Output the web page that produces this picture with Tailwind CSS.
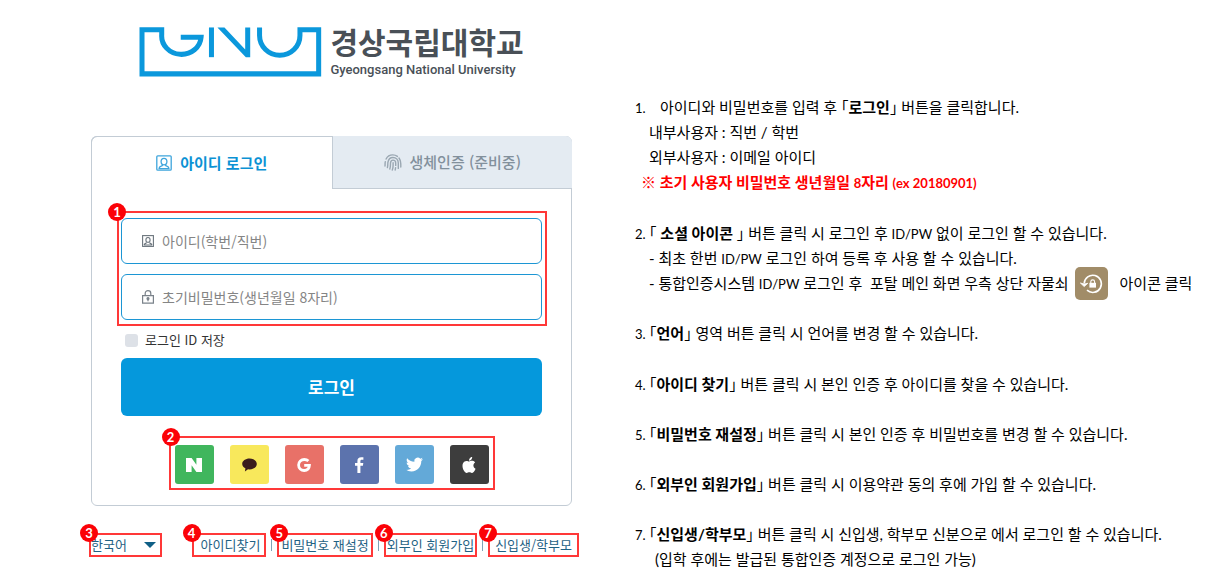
<!DOCTYPE html>
<html lang="ko">
<head>
    <meta charset="UTF-8">
    <meta name="viewport" content="width=device-width, initial-scale=1.0">
    <title>경상국립대학교 통합인증 로그인 안내</title>
    <script src="https://cdn.jsdelivr.net/npm/@tailwindcss/browser@4"></script>
</head>
<body class="bg-white text-black font-['Noto_Sans_CJK_KR',sans-serif]">
<div class="grid grid-cols-[481fr_590fr] gap-x-[63px] pl-[91px]">

    <!-- Login -->
    <main class="pt-[27px]">
        <header class="flex justify-center gap-2 h-[50px]">
            <svg class="w-[183px] h-[50px] shrink-0" viewBox="27 37 548 149" fill="none" stroke="#0b98dc" stroke-width="15" aria-hidden="true">
                <path d="M152 67H213A59 55 0 0 1 95 60V45H36V177H565V45H509V62A60 59 0 0 1 388 62V38"/>
                <path d="M244 38V127"/>
                <path d="M262 38H283L345 104V38H360V127H347Z" fill="#0b98dc" stroke="none"/>
            </svg>
            <div class="text-[#495057]">
                <h1 class="text-[30px] leading-[28px] font-bold whitespace-nowrap">경상국립대학교</h1>
                <p class="mt-1 font-['Roboto',sans-serif] text-[13px] leading-[22px] font-medium whitespace-nowrap">Gyeongsang National University</p>
            </div>
        </header>

        <form class="mt-[59px] border border-[#c3ccd5] rounded-md pb-[15px]">
            <div class="grid grid-cols-2 h-[53px] -mt-px -mx-px">
                <button type="button" class="flex items-center justify-center gap-2 text-[15px] font-bold text-[#0b92d4] border-t border-l border-[#c3ccd5] rounded-tl-md">
                    <svg class="size-4" viewBox="0 0 16 16" fill="none" stroke="#3fa5dc" stroke-width="1.3" aria-hidden="true">
                        <rect x=".8" y=".8" width="14.4" height="14.4" rx="1"/>
                        <ellipse cx="8" cy="6.6" rx="2.9" ry="3.3"/>
                        <path d="M2.8 13.6C3.3 11.6 4.8 11 6.3 10.6V9.6M13.2 13.6C12.7 11.6 11.2 11 9.7 10.6V9.6M2.5 13.6H13.5"/>
                    </svg>
                    아이디 로그인
                </button>
                <button type="button" class="flex items-center justify-center gap-2 text-[15px] font-medium text-[#82909c] bg-[#e4ebf2] border-l border-b border-[#c3ccd5] rounded-tr-md">
                    <svg class="w-[18px] h-[17px]" viewBox="0 0 18 17" fill="none" stroke="#9aa7b2" stroke-width="1.4" stroke-linecap="round" aria-hidden="true">
                        <path d="M1 12C1.2 10.5.9 9.6 1.3 7.6M2.1 5C3.4 2.4 6 .9 8.7.9C10.5.9 12 1.3 13.4 2.4M15 4C16.6 6 17 8.4 16.8 13"/>
                        <path d="M3.4 13.6C4 11.4 3.7 9.9 3.9 8.4C4.5 5.2 6.6 3.5 8.9 3.5C12 3.5 14.3 5.9 14.3 9V14.4"/>
                        <path d="M5.8 15C6.6 12.6 6.4 10.8 6.5 8.8C6.8 7 7.8 6.1 9 6.1C10.6 6.1 11.7 7.3 11.7 9V11.4M11.6 13.6L11.2 16"/>
                        <path d="M9.1 8.7V11.6C9.1 13.2 8.8 14.8 8.3 16.1"/>
                    </svg>
                    생체인증 (준비중)
                </button>
            </div>

            <div class="px-[25px]">
                <div class="relative mt-[22px] border-2 border-[#ff3838] pt-[5px] pb-1 pl-0.5 pr-[3px] -mr-px flex flex-col gap-2.5">
                    <span class="absolute -left-[11px] -top-[10px] size-[18px] rounded-full bg-[#fb0207] text-white text-center font-['Lato',sans-serif] text-[13px] leading-[18px] font-bold">1</span>
                    <label class="flex items-center h-[46px] border border-[#1c96d4] rounded-md pl-5 pr-3">
                        <svg class="size-3 shrink-0" viewBox="0 0 12 12" fill="none" stroke="#6b747c" stroke-width="1.1" aria-hidden="true">
                            <rect x=".6" y=".6" width="10.8" height="10.8"/>
                            <ellipse cx="6" cy="4.9" rx="2.1" ry="2.4"/>
                            <path d="M2 10.2C2.4 8.7 3.4 8.2 4.6 7.9M10 10.2C9.6 8.7 8.6 8.2 7.4 7.9M2 10H10"/>
                        </svg>
                        <input type="text" aria-label="아이디" placeholder="아이디(학번/직번)" class="ml-2 flex-1 min-w-0 text-[14px] outline-none placeholder:text-[#858585]">
                    </label>
                    <label class="flex items-center h-[46px] border border-[#1c96d4] rounded-md pl-5 pr-3">
                        <svg class="w-3 h-3.5 shrink-0" viewBox="0 0 12 14" fill="none" stroke="#7a828a" stroke-width="1.2" aria-hidden="true">
                            <path d="M.6 5.6H11.4V13.2H.6ZM3.2 5.6V3.4C3.2 1.6 4.4.7 6 .7S8.8 1.6 8.8 3.4V5.6M6 9V11.3"/>
                            <circle cx="6" cy="8.6" r="1" fill="#7a828a"/>
                        </svg>
                        <input type="password" aria-label="비밀번호" placeholder="초기비밀번호(생년월일 8자리)" class="ml-2 flex-1 min-w-0 text-[14px] outline-none placeholder:text-[#858585]">
                    </label>
                </div>

                <div class="px-1">
                    <label class="mt-1 h-5 flex items-center gap-[7px] pl-1 text-[13px] text-[#333]">
                        <input type="checkbox" class="appearance-none size-[13px] rounded-[3px] bg-[#dde1e7]">
                        로그인 ID 저장
                    </label>
                    <button type="submit" class="mt-2 block w-full h-[58px] rounded-md bg-[#0598dc] text-white text-[17px] font-bold">로그인</button>
                </div>
            </div>

            <div class="relative mt-5 mx-auto w-fit border-2 border-[#ff3838] pt-[7px] pb-1 px-1 flex gap-4">
                <span class="absolute -left-[9px] -top-[10px] size-[18px] rounded-full bg-[#fb0207] text-white text-center font-['Lato',sans-serif] text-[13px] leading-[18px] font-bold">2</span>
                <button type="button" aria-label="네이버" class="size-[39px] rounded-[3px] bg-[#40b65d] flex items-center justify-center">
                    <svg class="w-4 h-3.5" viewBox="0 0 16 14" fill="#fff"><path d="M0 0H5.6L10.4 6.7V0H16V14H10.4L5.6 7.3V14H0Z"/></svg>
                </button>
                <button type="button" aria-label="카카오" class="size-[39px] rounded-[3px] bg-[#f8e85c] flex items-center justify-center">
                    <svg class="w-[15px] h-[14px]" viewBox="0 0 15 14" fill="#3b1c1d"><path d="M7.5.5C11.5.5 14.8 2.9 14.8 6S11.5 11.4 7.5 11.4L6 11.3L2.9 13.6L3.4 10.3C1.5 9.4.2 7.8.2 6C.2 2.9 3.5.5 7.5.5Z"/></svg>
                </button>
                <button type="button" aria-label="구글" class="size-[39px] rounded-[3px] bg-[#e87168] flex items-center justify-center">
                    <svg class="size-3.5" viewBox="0 0 14 14" fill="none" stroke="#fff" stroke-width="2.8"><path d="M11.4 3.1C10.3 2 8.9 1.5 7.3 1.5C4.2 1.5 1.6 3.9 1.6 7S4.1 12.5 7.2 12.5C10.4 12.5 12.2 10.6 12.4 7.4H7.2"/></svg>
                </button>
                <button type="button" aria-label="페이스북" class="size-[39px] rounded-[3px] bg-[#5c73ad] flex items-center justify-center">
                    <svg class="w-[9px] h-4" viewBox="0 0 9 16" fill="#fff"><path d="M2.4 16V8.8H0V6H2.4V3.9C2.4 1.5 3.9.2 6.1.2C7.2.2 8.1.3 8.4.3V2.8H6.9C5.7 2.8 5.4 3.4 5.4 4.2V6H8.3L7.9 8.8H5.4V16Z"/></svg>
                </button>
                <button type="button" aria-label="트위터" class="size-[39px] rounded-[3px] bg-[#63a9d8] flex items-center justify-center">
                    <svg class="size-[17px]" viewBox="0 0 24 24" fill="#fff"><path d="M23.95 4.57a10 10 0 0 1-2.82.77 4.96 4.96 0 0 0 2.16-2.72c-.95.55-2 .96-3.13 1.18a4.92 4.92 0 0 0-8.38 4.48C7.69 8.1 4.07 6.13 1.64 3.16a4.82 4.82 0 0 0-.67 2.48c0 1.71.87 3.21 2.19 4.1a4.9 4.9 0 0 1-2.23-.62v.06a4.92 4.92 0 0 0 3.95 4.83 5 5 0 0 1-2.21.08 4.94 4.94 0 0 0 4.6 3.42A9.87 9.87 0 0 1 0 19.54a13.99 13.99 0 0 0 7.56 2.21c9.05 0 14-7.5 14-13.98 0-.21 0-.42-.02-.63a9.94 9.94 0 0 0 2.41-2.57Z"/></svg>
                </button>
                <button type="button" aria-label="애플" class="size-[39px] rounded-[3px] bg-[#3d3d3d] flex items-center justify-center">
                    <svg class="size-4" viewBox="0 0 24 24" fill="#fff"><path d="M12.15 6.9c-.95 0-2.42-1.08-3.96-1.04-2.04.03-3.91 1.18-4.96 3.01-2.12 3.68-.55 9.1 1.52 12.09 1.01 1.45 2.21 3.09 3.79 3.04 1.52-.07 2.09-.99 3.94-.99 1.83 0 2.35.99 3.96.95 1.64-.03 2.68-1.48 3.68-2.95 1.16-1.69 1.64-3.33 1.66-3.42-.04-.01-3.18-1.22-3.22-4.86-.03-3.04 2.48-4.49 2.6-4.56-1.43-2.09-3.62-2.32-4.39-2.38-2-.16-3.68 1.09-4.61 1.09ZM15.53 3.83c.84-1.01 1.4-2.43 1.25-3.83-1.21.05-2.66.8-3.53 1.82-.78.9-1.45 2.34-1.27 3.71 1.34.1 2.72-.69 3.56-1.7"/></svg>
                </button>
            </div>
        </form>

        <div class="mt-[27px] -ml-0.5 -mr-[7px] flex items-center justify-between text-[13px] text-[#1f6284] whitespace-nowrap">
            <div class="relative w-[73px] h-6 border-2 border-[#ff3838]">
                <span class="absolute z-10 -left-[11px] -top-[11px] size-[18px] rounded-full bg-[#fb0207] text-white text-center font-['Lato',sans-serif] text-[13px] leading-[18px] font-bold">3</span>
                <select aria-label="언어" class="block appearance-none w-full h-5 leading-5 outline-none">
                    <option>한국어</option>
                    <option>English</option>
                </select>
                <svg class="absolute right-1 top-[7px] w-3 h-1.5 pointer-events-none" viewBox="0 0 12 6" fill="#0f5f86"><path d="M0 0H12L6 6Z"/></svg>
            </div>
            <nav class="flex items-center">
                <a href="#" class="relative h-6 leading-5 border-2 border-[#ff3838] pl-[7px] pr-1">
                    <span class="absolute -left-[11px] -top-[11px] size-[18px] rounded-full bg-[#fb0207] text-white text-center font-['Lato',sans-serif] text-[13px] leading-[18px] font-bold">4</span>아이디찾기</a>
                <span class="mx-[5px] w-px h-3 bg-[#7fa3b5]"></span>
                <a href="#" class="relative h-6 leading-5 border-2 border-[#ff3838] px-0.5">
                    <span class="absolute -left-[9px] -top-[11px] size-[18px] rounded-full bg-[#fb0207] text-white text-center font-['Lato',sans-serif] text-[13px] leading-[18px] font-bold">5</span>비밀번호 재설정</a>
                <span class="mx-[5px] w-px h-3 bg-[#7fa3b5]"></span>
                <a href="#" class="relative h-6 leading-5 border-2 border-[#ff3838] px-px">
                    <span class="absolute -left-[11px] -top-[11px] size-[18px] rounded-full bg-[#fb0207] text-white text-center font-['Lato',sans-serif] text-[13px] leading-[18px] font-bold">6</span>외부인 회원가입</a>
                <span class="mx-[5px] w-px h-3 bg-[#7fa3b5]"></span>
                <a href="#" class="relative h-6 leading-5 border-2 border-[#ff3838] px-[5px]">
                    <span class="absolute -left-[11px] -top-[11px] size-[18px] rounded-full bg-[#fb0207] text-white text-center font-['Lato',sans-serif] text-[13px] leading-[18px] font-bold">7</span>신입생/학부모</a>
            </nav>
        </div>
    </main>

    <!-- Guide -->
    <section class="pt-[95px] font-['Lato','Noto_Sans_CJK_KR',sans-serif] text-[15px] leading-[25px] whitespace-nowrap [font-feature-settings:'halt']">
        <div class="mb-[26px]">
            <p><span class="inline-block w-[25px] text-[13px] leading-none">1.</span>아이디와 비밀번호를 입력 후 「<b>로그인</b>」 버튼을 클릭합니다.</p>
            <p class="pl-3.5">내부사용자 : 직번 / 학번</p>
            <p class="pl-3.5">외부사용자 : 이메일 아이디</p>
            <p class="pl-1.5 font-bold text-[#ff0000]">※ 초기 사용자 비밀번호 생년월일 <span class="text-[13px] leading-none">8</span>자리 <span class="text-[13px] leading-none">(ex 20180901)</span></p>
        </div>
        <div class="mb-[25px]">
            <p><span class="inline-block w-3.5 text-[13px] leading-none">2.</span>「 <b>소셜 아이콘</b> 」 버튼 클릭 시 로그인 후 <span class="text-[13px] leading-none">ID/PW</span> 없이 로그인 할 수 있습니다.</p>
            <p class="pl-3.5">- 최초 한번 <span class="text-[13px] leading-none">ID/PW</span> 로그인 하여 등록 후 사용 할 수 있습니다.</p>
            <div class="pl-3.5 h-[25px] flex items-center">
                <p>- 통합인증시스템 <span class="text-[13px] leading-none">ID/PW</span> 로그인 후&nbsp; 포탈 메인 화면 우측 상단 자물쇠</p>
                <svg class="size-[33px] ml-1.5 mr-3 shrink-0" viewBox="0 0 33 33" fill="none" aria-hidden="true">
                    <rect width="33" height="33" rx="5" fill="#a18c68"/>
                    <path d="M9.2 16.5A8.6 8.6 0 1 1 12 23.2" stroke="#fff" stroke-width="1.6"/>
                    <path d="M5.4 16L9.2 19.6L12.8 16.3L9.2 17Z" fill="#fff" stroke="#fff" stroke-width=".8"/>
                    <path d="M14.4 15.8H21V20.6H14.4Z" fill="#fff"/>
                    <path d="M15.8 16V14.8A1.9 1.9 0 0 1 19.6 14.8V16" stroke="#fff" stroke-width="1.1"/>
                </svg>
                <p>아이콘 클릭</p>
            </div>
        </div>
        <p class="mb-[26px]"><span class="inline-block w-3.5 text-[13px] leading-none">3.</span>「<b>언어</b>」 영역 버튼 클릭 시 언어를 변경 할 수 있습니다.</p>
        <p class="mb-[25px]"><span class="inline-block w-3.5 text-[13px] leading-none">4.</span>「<b>아이디 찾기</b>」 버튼 클릭 시 본인 인증 후 아이디를 찾을 수 있습니다.</p>
        <p class="mb-[25px]"><span class="inline-block w-3.5 text-[13px] leading-none">5.</span>「<b>비밀번호 재설정</b>」 버튼 클릭 시 본인 인증 후 비밀번호를 변경 할 수 있습니다.</p>
        <p class="mb-[25px]"><span class="inline-block w-3.5 text-[13px] leading-none">6.</span>「<b>외부인 회원가입</b>」 버튼 클릭 시 이용약관 동의 후에 가입 할 수 있습니다.</p>
        <div>
            <p><span class="inline-block w-3.5 text-[13px] leading-none">7.</span>「<b>신입생/학부모</b>」 버튼 클릭 시 신입생, 학부모 신분으로 에서 로그인 할 수 있습니다.</p>
            <p class="pl-5">(입학 후에는 발급된 통합인증 계정으로 로그인 가능)</p>
        </div>
    </section>
</div>
</body>
</html>
